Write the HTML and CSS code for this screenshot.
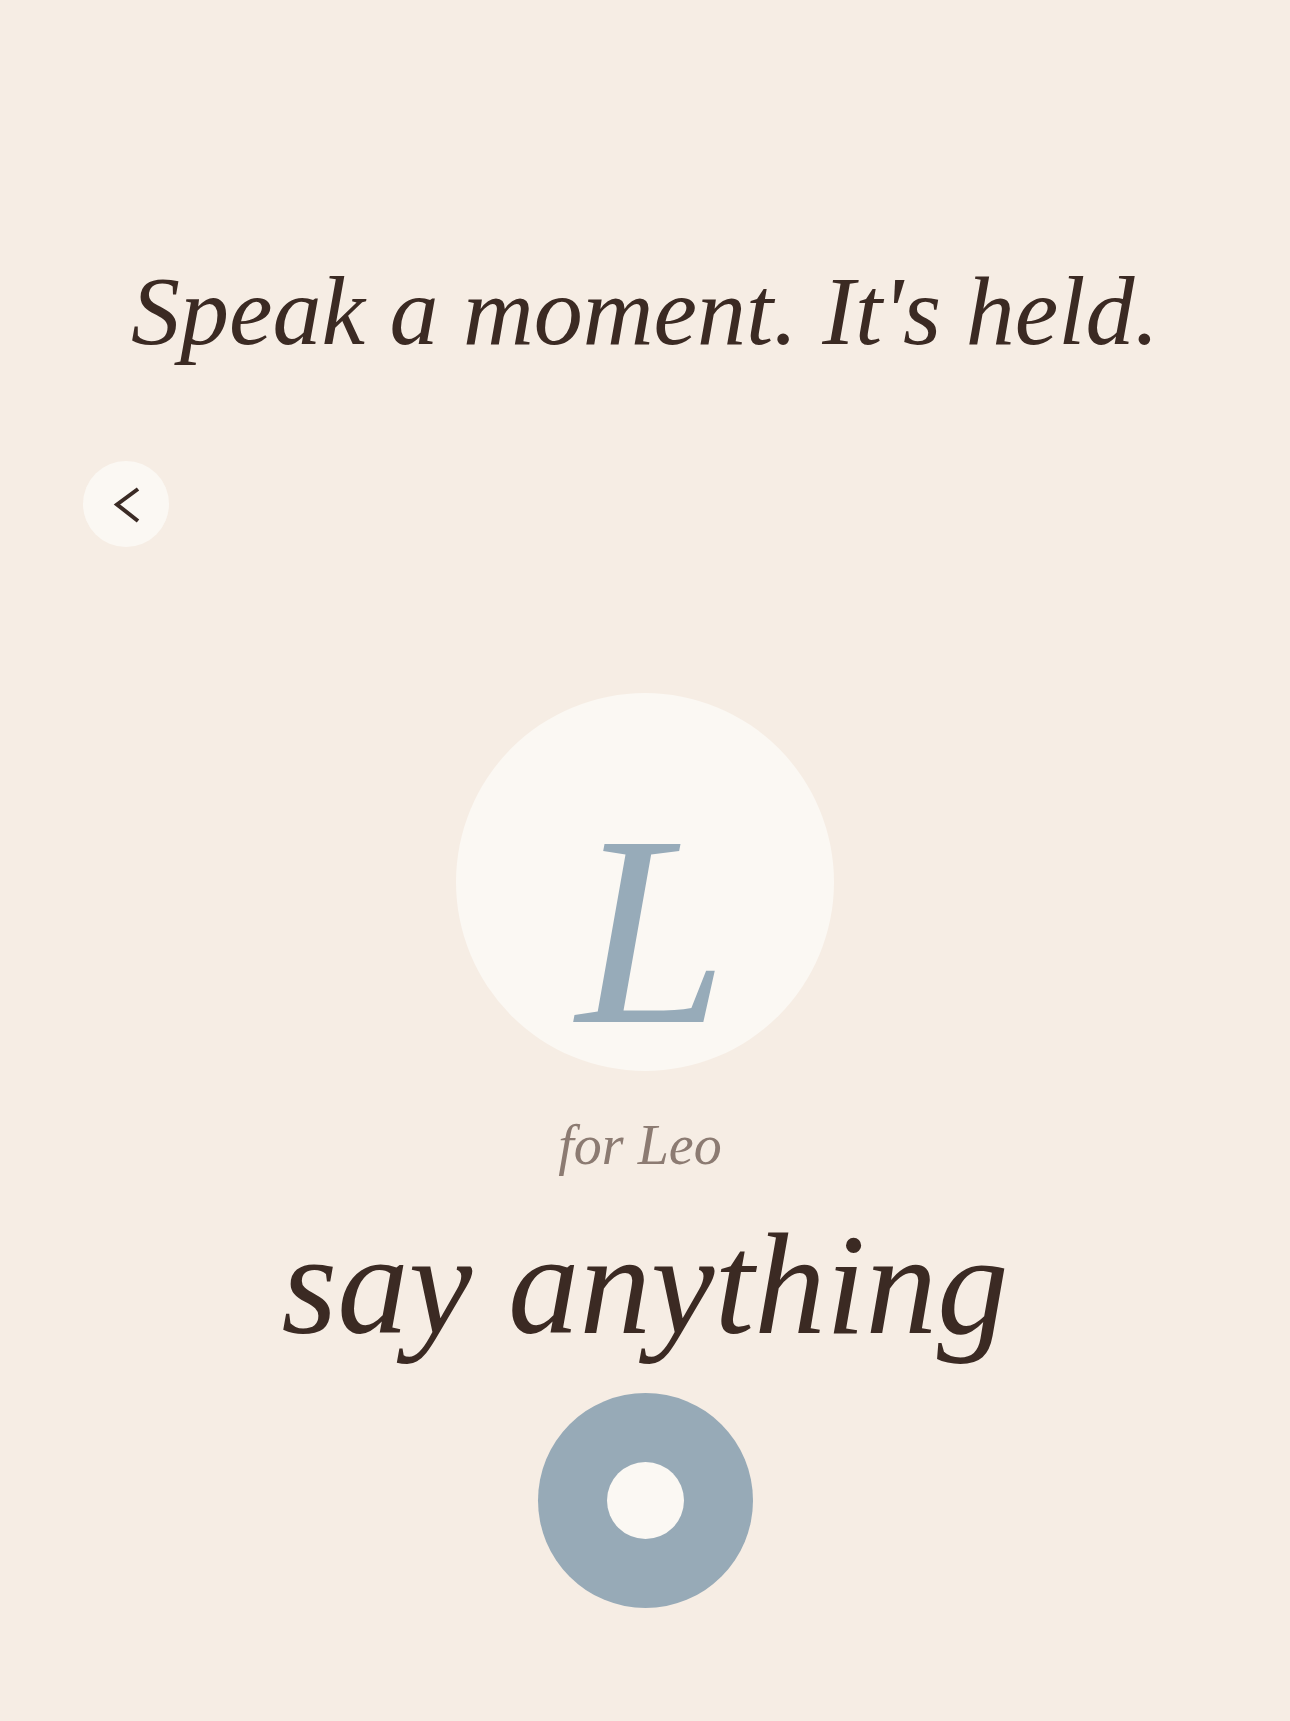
FILE: index.html
```html
<!DOCTYPE html>
<html lang="en">
<head>
<meta charset="utf-8">
<title>Speak a moment</title>
<link rel="stylesheet" href="styles.css">
</head>
<body>
<main class="screen">
  <h1 class="headline">Speak a moment. It's held.</h1>
  <div class="nav-row">
    <button class="back-btn" aria-label="Back">
      <svg class="back-icon" viewBox="0 0 86 86" width="86" height="86"><path d="M55 28 L34 43.5 L55 60" fill="none" stroke="#3a2a24" stroke-width="4" stroke-linecap="butt" stroke-linejoin="miter"/></svg>
    </button>
  </div>
  <div class="avatar"><span class="avatar-letter">L</span></div>
  <p class="for-name">for Leo</p>
  <p class="prompt">say anything</p>
  <button class="record-btn" aria-label="Record"><span class="record-dot"></span></button>
</main>
</body>
</html>
```
FILE: styles.css
```css
html, body {
  margin: 0;
  padding: 0;
  background: #f6ede4;
}
body {
  width: 1290px;
  height: 1721px;
  overflow: hidden;
  font-family: "Liberation Serif", "DejaVu Serif", serif;
  color: #3b2a23;
}
.screen {
  display: flex;
  flex-direction: column;
  align-items: center;
  padding-top: 251px;
}
.headline {
  margin: 0;
  font-style: italic;
  font-weight: 400;
  font-size: 98px;
  line-height: 120px;
  letter-spacing: 0;
}
.nav-row {
  align-self: stretch;
  display: flex;
  padding-left: 83px;
  margin-top: 90px;
}
.back-btn {
  width: 86px;
  height: 86px;
  border-radius: 50%;
  border: none;
  background: #fbf8f3;
  display: block;
  padding: 0;
}
.back-icon {
  display: block;
}
.avatar {
  margin-top: 146px;
  width: 378px;
  height: 378px;
  box-sizing: border-box;
  border-radius: 50%;
  background: #fbf8f3;
  display: flex;
  align-items: flex-end;
  justify-content: center;
  padding: 0 0 4px 14px;
}
.avatar-letter {
  font-style: italic;
  font-size: 272px;
  line-height: 1;
  color: #97abb9;
}
.for-name {
  margin: 39px 0 0;
  padding-right: 10px;
  font-style: italic;
  font-size: 56px;
  line-height: 70px;
  color: #8c7b72;
}
.prompt {
  margin: 20px 0 0;
  font-style: italic;
  font-size: 143px;
  line-height: 170px;
}
.record-btn {
  margin-top: 23px;
  width: 215px;
  height: 215px;
  border-radius: 50%;
  border: none;
  padding: 0;
  background: #97aab7;
  display: flex;
  align-items: center;
  justify-content: center;
}
.record-dot {
  width: 77px;
  height: 77px;
  border-radius: 50%;
  background: #fbf8f3;
}
```
